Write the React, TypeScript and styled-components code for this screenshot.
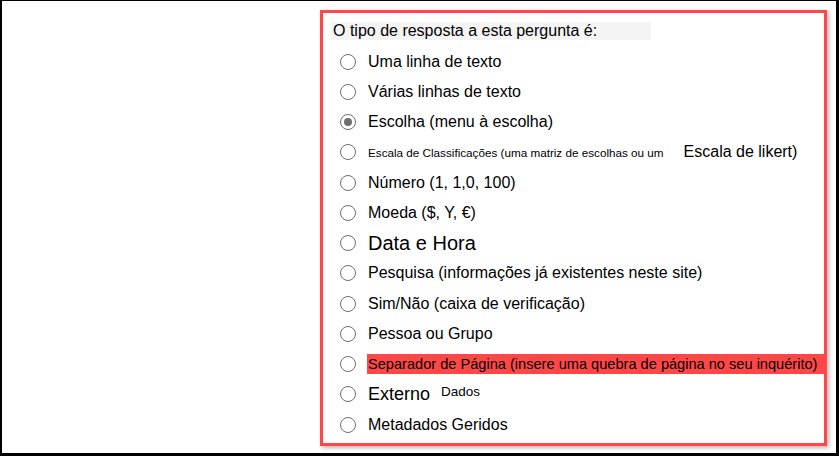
import styled, { createGlobalStyle } from 'styled-components';

const GlobalStyle = createGlobalStyle`
  html, body {
    margin: 0;
    padding: 0;
    background: #ffffff;
  }
  body {
    font-family: 'Liberation Sans', Arial, sans-serif;
    color: #000000;
  }
`;

// outer screenshot frame
const Frame = styled.div`
  box-sizing: border-box;
  width: 839px;
  height: 456px;
  border-style: solid;
  border-color: #000000;
  border-width: 1px 3px 3px 2px;
  background: #ffffff;
  padding: 9px 0 0 318px;
  overflow: hidden;
`;

// the red highlight box
const Panel = styled.section`
  box-sizing: border-box;
  width: 507px;
  height: 436px;
  border: 3px solid #ff4747;
  box-shadow: 2px 2px 4px rgba(0, 0, 0, 0.28);
  padding: 9px 0 0 8px;
  display: flex;
  flex-direction: column;
`;

const Title = styled.div`
  width: 320px;
  height: 18px;
  line-height: 18px;
  padding-left: 2px;
  box-sizing: border-box;
  background: #f4f4f4;
  font-size: 16px;
  white-space: nowrap;
`;

const OptionList = styled.div`
  display: flex;
  flex-direction: column;
  margin-top: 6.5px;
  padding-left: 9px;
`;

const Option = styled.label`
  display: flex;
  align-items: center;
  height: 30.25px;
  white-space: nowrap;
`;

const Radio = styled.span<{ $checked?: boolean }>`
  box-sizing: border-box;
  flex: none;
  width: 16px;
  height: 16px;
  border-radius: 50%;
  border: 1.7px solid #6f6f6f;
  background: #ffffff;
  margin-right: 12px;
  display: flex;
  align-items: center;
  justify-content: center;

  &::after {
    content: '';
    display: ${({ $checked }) => ($checked ? 'block' : 'none')};
    width: 8px;
    height: 8px;
    border-radius: 50%;
    background: #6f6f6f;
  }
`;

const Label = styled.span<{ $size?: number; $marked?: boolean }>`
  font-size: ${({ $size }) => $size ?? 16}px;
  line-height: 20px;
  display: inline-flex;
  align-items: baseline;
  ${({ $marked }) =>
    $marked &&
    `
    background: #ff4747;
    height: 20px;
    width: 456px;
    margin-left: -1px;
    padding-left: 1px;
  `}
`;

const Small = styled.span`
  font-size: 11.7px;
`;

const Tail = styled.span`
  font-size: 16px;
  margin-left: 20px;
`;

const Raised = styled.span`
  font-size: 13.5px;
  margin-left: 11px;
  align-self: flex-start;
  line-height: 16px;
`;

const Big = styled.span`
  font-size: 18px;
`;

export default function App() {
  return (
    <>
      <GlobalStyle />
      <Frame>
        <Panel>
          <Title>O tipo de resposta a esta pergunta é:</Title>
          <OptionList>
            <Option>
              <Radio />
              <Label>Uma linha de texto</Label>
            </Option>
            <Option>
              <Radio />
              <Label>Várias linhas de texto</Label>
            </Option>
            <Option>
              <Radio $checked />
              <Label>Escolha (menu à escolha)</Label>
            </Option>
            <Option>
              <Radio />
              <Label>
                <Small>Escala de Classificações (uma matriz de escolhas ou um</Small>
                <Tail>Escala de likert)</Tail>
              </Label>
            </Option>
            <Option>
              <Radio />
              <Label>Número (1, 1,0, 100)</Label>
            </Option>
            <Option>
              <Radio />
              <Label>Moeda ($, Y, €)</Label>
            </Option>
            <Option>
              <Radio />
              <Label $size={20}>Data e Hora</Label>
            </Option>
            <Option>
              <Radio />
              <Label>Pesquisa (informações já existentes neste site)</Label>
            </Option>
            <Option>
              <Radio />
              <Label>Sim/Não (caixa de verificação)</Label>
            </Option>
            <Option>
              <Radio />
              <Label>Pessoa ou Grupo</Label>
            </Option>
            <Option>
              <Radio />
              <Label $marked $size={14.6}>
                Separador de Página (insere uma quebra de página no seu inquérito)
              </Label>
            </Option>
            <Option>
              <Radio />
              <Label>
                <Big>Externo</Big>
                <Raised>Dados</Raised>
              </Label>
            </Option>
            <Option>
              <Radio />
              <Label>Metadados Geridos</Label>
            </Option>
          </OptionList>
        </Panel>
      </Frame>
    </>
  );
}
